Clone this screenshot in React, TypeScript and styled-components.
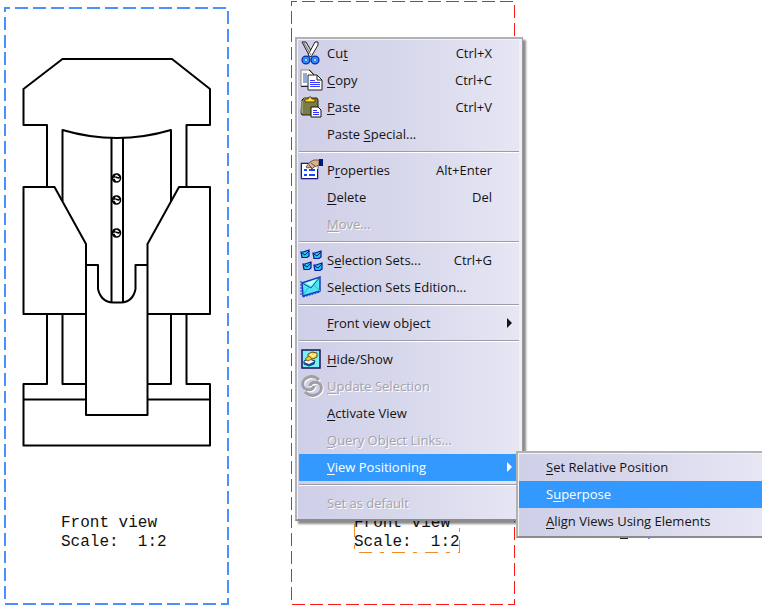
import React from 'react';
import styled, { createGlobalStyle, css } from 'styled-components';

const GlobalStyle = createGlobalStyle`
  * { box-sizing: border-box; }
  body { margin: 0; background: #fff; }
`;

const Page = styled.main`
  position: relative;
  min-height: 100vh;
  overflow: hidden;
  background: #fff;
`;

const Sheet = styled.div`
  display: flex;
  align-items: stretch;
  gap: 61px;
  padding-left: 4px;
  height: 605px;
`;

const View = styled.figure<{ $inset?: boolean }>`
  position: relative;
  display: flex;
  flex-direction: column;
  justify-content: space-between;
  width: 225px;
  margin: ${p => (p.$inset ? '7px 0 0' : '0')};
  padding: 50px 0 53px 18px;
`;

const Frame = styled.svg`
  position: absolute;
  inset: 0;
  width: 100%;
  height: 100%;
`;

const Drawing = styled.svg`
  display: block;
  width: 190px;
  height: 390px;
`;

const Caption = styled.figcaption<{ $selected?: boolean }>`
  position: relative;
  align-self: flex-start;
  margin-top: auto;
  margin-left: ${p => (p.$selected ? '46px' : '39px')};
  font: 16px/19px 'Liberation Mono', monospace;
  color: #111;
  white-space: pre;
`;

const SelectionBox = styled.svg`
  position: absolute;
  inset: 0;
  width: 100%;
  height: 100%;
  overflow: visible;
`;

const Panel = styled.div`
  position: absolute;
  display: flex;
  flex-direction: column;
  border: 1px solid #b2b2b2;
  font: 13px/18px 'Open Sans', 'Noto Sans', sans-serif;
  background: linear-gradient(90deg, #cfcfe8 0%, #d6d6eb 40%, #e6e6f4 100%);
`;

const Menu = styled(Panel)`
  left: 295px;
  top: 37px;
  min-width: 228px;
  padding: 1px 3px 2px 2px;
  border-width: 2px 1px 2px 2px;
  border-right-color: #999;
  border-bottom-color: #8c8c8c;
  box-shadow: inset 1px 1px 0 #f2f2f2, inset -3px 0 0 #f0f0f4, 3px 3px 2px rgba(0, 0, 0, 0.45);
`;

const Submenu = styled(Panel)`
  left: 516px;
  top: 451px;
  width: 246px;
  padding: 1px 0 1px 1px;
  border-width: 2px 0 2px 2px;
  border-bottom-color: #8c8c8c;
  box-shadow: inset 1px 1px 0 #f2f2f2;
`;

const Item = styled.button<{ $active?: boolean }>`
  display: flex;
  align-items: center;
  height: 27px;
  margin: 0;
  padding: 0 27px 2px 1px;
  border: 0;
  background: none;
  font: inherit;
  color: #141414;
  text-align: left;
  white-space: nowrap;
  u { text-underline-offset: 2px; }
  ${p => p.$active && css`
    background: #3399ff;
    color: #fff;
  `}
  &:disabled {
    color: #a3a3aa;
    text-shadow: 1px 1px 0 #fff;
  }
`;

const SubItem = styled(Item)`
  padding-left: 27px;
`;

const IconSlot = styled.span`
  flex: none;
  display: flex;
  align-items: center;
  width: 27px;
`;

const Label = styled.span`
  flex: 1;
`;

const Shortcut = styled.kbd`
  font: inherit;
`;

const Arrow = styled.svg`
  width: 5px;
  height: 10px;
  margin-right: -20px;
`;

const Separator = styled.hr`
  width: 100%;
  height: 9px;
  margin: 0;
  border: 0;
  background: linear-gradient(#9c9ca4, #9c9ca4) 0 3px / 100% 1px no-repeat,
    linear-gradient(#fff, #fff) 0 4px / 100% 1px no-repeat;
`;

const HiddenView = styled.svg`
  position: absolute;
  left: 620px;
  top: 450px;
  width: 112px;
  height: 90px;
`;

const DashedFrame = ({ color, width }: { color: string; width: 1 | 2 }) => (
  <Frame viewBox="0 0 225 605" preserveAspectRatio="none" aria-hidden="true">
    <path d={width === 1 ? 'M1.500 1.500H224.500V604.500H1.500Z' : 'M1 1H224V604H1Z'} fill="none" stroke={color} strokeWidth={width}
      strokeDasharray="13 5" strokeDashoffset="8" shapeRendering="crispEdges" />
  </Frame>
);

const Hole = ({ y }: { y: number }) => (
  <g transform={`translate(116.5 ${y})`}>
    <circle r="4" fill="#fff" strokeWidth="1.6" />
    <path d="M-5-1H-2V-4M-1-1L2 0L4-2M1-4L4-1" strokeWidth="1.6" />
    <path d="M-3 1L-1 4" strokeWidth="2" />
  </g>
);

const PartDrawing = () => (
  <Drawing viewBox="22 57 190 390" fill="none" stroke="#000" strokeWidth="2" strokeLinejoin="round" role="img" aria-label="Front view of clamp">
    <path d="M47 187V125H23.500V89L62.500 59H172L210 89V125H186.500V187" />
    <path d="M62.500 201V130Q117 146 171 130V201" />
    <path d="M111.500 138V302M123 138V302" />
    <path d="M86 314H23.500V187H54.500L86 244V415H147.500V244L179 187H210V314H147.500" />
    <path d="M86 265H98V289Q101 302 113 302.500H121Q133 302 135.500 289V265H147.500" />
    <path d="M47 314V384H23.500V445.500H210V384H186.500V314" />
    <path d="M62.500 314V384H86M171 314V384H147.500M23.500 399.500H86M147.500 399.500H210" />
    <Hole y={178} />
    <Hole y={200} />
    <Hole y={233} />
  </Drawing>
);

const CutIcon = () => (
  <svg width="22" height="24" viewBox="0 0 22 24">
    <path d="M2 1L10 16L13 13L6 1Z" fill="#d4d4d4" stroke="#222" />
    <path d="M15 1L8 14L11 16L18 4V1Z" fill="#fff" stroke="#222" />
    <path d="M4 2L11 14" stroke="#777" />
    <circle cx="6" cy="19" r="2.800" fill="#fff" stroke="#0630a8" strokeWidth="3.600" />
    <circle cx="15" cy="19" r="2.800" fill="#fff" stroke="#0630a8" strokeWidth="3.600" />
    <circle cx="6" cy="19" r="2.300" fill="none" stroke="#2f8cff" strokeWidth="2" />
    <circle cx="15" cy="19" r="2.300" fill="none" stroke="#2f8cff" strokeWidth="2" />
  </svg>
);

const CopyIcon = () => (
  <svg width="23" height="22" viewBox="0 0 23 22">
    <path d="M1 1H10L14 5V17H1Z" fill="#fff" stroke="#8a8a78" />
    <path d="M1 17.500H9M9 1L14 6" stroke="#222" />
    <path d="M3 5H7M3 7H7M3 9H7M3 11H7M3 13H7" stroke="#2b5ba8" />
    <path d="M8 6H17L22 11V21H8Z" fill="#fff" stroke="#222" />
    <path d="M17 6V11H22" fill="none" stroke="#222" />
    <path d="M10 11.500H15M10 13.500H20M10 15.500H20M10 17.500H20" stroke="#3939ff" />
  </svg>
);

const PasteIcon = () => (
  <svg width="22" height="22" viewBox="0 0 22 22">
    <path d="M2 4L4 2H17L18 4V18L16 19H2L1 17Z" fill="#7c7c48" stroke="#25250f" />
    <path d="M2 5V17M4 3H7" stroke="#c9c99a" />
    <path d="M5 5V3H8L9 1H11L12 3H15V6H5Z" fill="#ffd83b" stroke="#5b4500" />
    <path d="M11 11H18L21 14V21H11Z" fill="#fff" stroke="#111" />
    <path d="M13 14.500H17M13 16.500H19M13 18.500H19" stroke="#3030ff" />
  </svg>
);

const PropertiesIcon = () => (
  <svg width="23" height="21" viewBox="0 0 23 21">
    <path d="M1 4H18V20H1Z" fill="#fff" stroke="#6868a0" />
    <path d="M1.500 4V19.500H17.500V10M2 4.500H9" fill="none" stroke="#1c1c80" />
    <path d="M4 11H7M9 11H15M4 16H7M9 16H15" stroke="#1646ff" strokeWidth="2" />
    <path d="M6 8L10 3L14 1H19V6L14 8L12 10L10 8L8 9Z" fill="#d9b18e" stroke="#725746" />
    <path d="M9 6L12 9M11 4L15 7" stroke="#725746" />
    <path d="M19 0H23V7H19Z" fill="#001878" />
  </svg>
);

const MiniEnvelope = ({ x, y }: { x: number; y: number }) => (
  <g transform={`translate(${x} ${y})`}>
    <path d="M0 2H2L8 0V6L6 7.500H1Z" fill="#29c3ef" stroke="#0717a0" strokeWidth="1.200" />
    <path d="M1 3L4 5L8 1" fill="none" stroke="#042266" />
  </g>
);

const SetsIcon = () => (
  <svg width="24" height="24" viewBox="0 0 24 24">
    <MiniEnvelope x={1} y={2} />
    <MiniEnvelope x={13} y={3} />
    <MiniEnvelope x={3} y={14} />
    <MiniEnvelope x={14} y={15} />
  </svg>
);

const EditionIcon = () => (
  <svg width="22" height="23" viewBox="0 0 22 23">
    <path d="M2 8L20 2V16L3 21Z" fill="#52e6f3" stroke="#123fbb" strokeWidth="1.500" />
    <path d="M2 8L11 13L20 2" fill="none" stroke="#0b5990" />
    <path d="M3 20L9 12M14 10L20 16" fill="none" stroke="#35b4d0" />
    <path d="M5 8L11 11L17 4Z" fill="#bffcff" />
    <path d="M1 6V21M3 22L20 17" stroke="#1535c8" strokeDasharray="2 1" />
  </svg>
);

const HideShowIcon = () => (
  <svg width="22" height="20" viewBox="0 0 22 20">
    <rect x="2" y="1" width="18" height="18" fill="#7aeff5" stroke="#15155b" strokeWidth="1.500" />
    <path d="M8 5L12 3L17 4V8L13 10L8 8Z" fill="#f6d351" stroke="#665014" />
    <path d="M10 5L13 7L16 5" fill="none" stroke="#fff4b0" strokeWidth="1.500" />
    <path d="M4 12L9 10L15 12L14 15L9 17L4 15Z" fill="#fff" stroke="#143577" />
    <path d="M4 13L9 15L15 12L14 15L9 17L4 15Z" fill="#174c94" />
    <path d="M5 10L9 7L12 10L8 12Z" fill="#f3c73e" stroke="#806b20" />
  </svg>
);

const Swirl = () => (
  <>
    <path d="M19 6C12-1 1 4 3 12C5 17 13 17 14 12" />
    <path d="M5 18C12 25 23 20 21 12C19 7 11 7 10 12" />
  </>
);

const UpdateIcon = () => (
  <svg width="24" height="24" viewBox="0 0 24 24" fill="none">
    <g stroke="#fff" strokeWidth="3" transform="translate(1 1)"><Swirl /></g>
    <g stroke="#a0a0a4" strokeWidth="3"><Swirl /></g>
  </svg>
);

const Submark = () => (
  <Arrow viewBox="0 0 5 10" aria-hidden="true"><path d="M0 0L5 5L0 10Z" fill="currentColor" /></Arrow>
);

type Entry = {
  text: [string, string, string];
  keys?: string;
  icon?: React.ReactNode;
  disabled?: boolean;
  active?: boolean;
  sub?: boolean;
};

const groups: Entry[][] = [
  [
    { text: ['Cu', 't', ''], keys: 'Ctrl+X', icon: <CutIcon /> },
    { text: ['', 'C', 'opy'], keys: 'Ctrl+C', icon: <CopyIcon /> },
    { text: ['', 'P', 'aste'], keys: 'Ctrl+V', icon: <PasteIcon /> },
    { text: ['Paste ', 'S', 'pecial...'] },
  ],
  [
    { text: ['P', 'r', 'operties'], keys: 'Alt+Enter', icon: <PropertiesIcon /> },
    { text: ['', 'D', 'elete'], keys: 'Del' },
    { text: ['', 'M', 'ove...'], disabled: true },
  ],
  [
    { text: ['S', 'e', 'lection Sets...'], keys: 'Ctrl+G', icon: <SetsIcon /> },
    { text: ['Se', 'l', 'ection Sets Edition...'], icon: <EditionIcon /> },
  ],
  [{ text: ['', 'F', 'ront view object'], sub: true }],
  [
    { text: ['', 'H', 'ide/Show'], icon: <HideShowIcon /> },
    { text: ['', 'U', 'pdate Selection'], icon: <UpdateIcon />, disabled: true },
    { text: ['', 'A', 'ctivate View'] },
    { text: ['', 'Q', 'uery Object Links...'], disabled: true },
    { text: ['', 'V', 'iew Positioning'], active: true, sub: true },
  ],
  [{ text: ['Set as default', '', ''], disabled: true }],
];

const positioning: Entry[] = [
  { text: ['', 'S', 'et Relative Position'] },
  { text: ['S', 'u', 'perpose'], active: true },
  { text: ['', 'A', 'lign Views Using Elements'] },
];

const Mnemonic = ({ text: [before, key, after] }: { text: Entry['text'] }) => (
  <Label>{before}{key && <u>{key}</u>}{after}</Label>
);

export default function App() {
  return (
    <Page>
      <GlobalStyle />
      <Sheet>
        <View $inset>
          <DashedFrame color="#4a90ff" width={2} />
          <PartDrawing />
          <Caption>{'Front view\nScale:  1:2'}</Caption>
        </View>
        <View>
          <DashedFrame color="#ff1a1a" width={1} />
          <Caption $selected>
            {'Front view\nScale:  1:2'}
            <SelectionBox aria-hidden="true">
              <rect x="0" y="0" width="100%" height="100%" fill="none" stroke="#f08c28"
                strokeDasharray="13 8 4 8" shapeRendering="crispEdges" />
            </SelectionBox>
          </Caption>
        </View>
      </Sheet>
      <HiddenView viewBox="0 0 112 90" aria-hidden="true">
        <path d="M0 1.500H12M34 1.500H44M109 1.500H112M0 88.500H8" stroke="#222" />
        <path d="M28 88.500H30" stroke="#4a90ff" />
      </HiddenView>
      <Menu role="menu" aria-label="View">
        {groups.map((group, i) => (
          <React.Fragment key={i}>
            {i > 0 && <Separator />}
            {group.map(entry => (
              <Item key={entry.text.join('')} type="button" role="menuitem" disabled={entry.disabled} $active={entry.active}>
                <IconSlot>{entry.icon}</IconSlot>
                <Mnemonic text={entry.text} />
                {entry.keys && <Shortcut>{entry.keys}</Shortcut>}
                {entry.sub && <Submark />}
              </Item>
            ))}
          </React.Fragment>
        ))}
      </Menu>
      <Submenu role="menu" aria-label="View Positioning">
        {positioning.map(entry => (
          <SubItem key={entry.text.join('')} type="button" role="menuitem" $active={entry.active}>
            <Mnemonic text={entry.text} />
          </SubItem>
        ))}
      </Submenu>
    </Page>
  );
}
